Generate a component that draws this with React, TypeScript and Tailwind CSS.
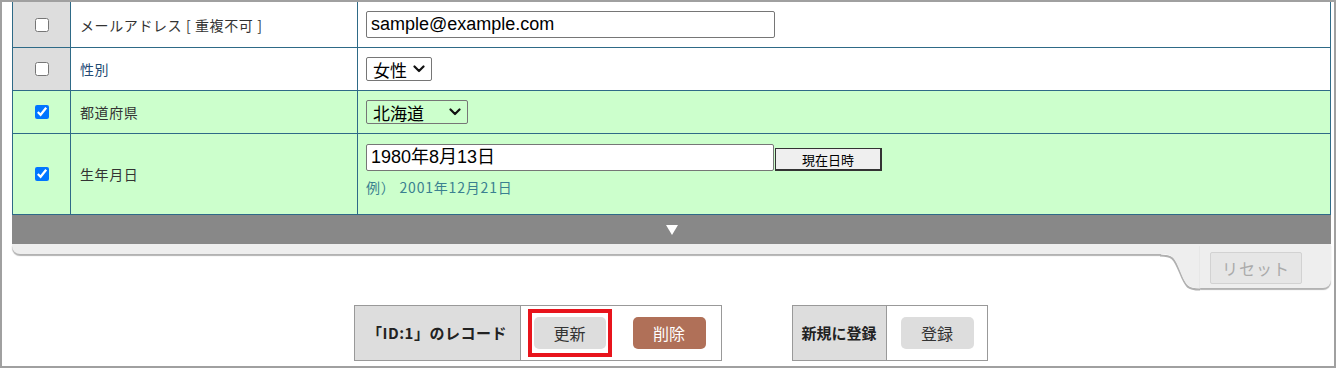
import React, { useState } from 'react';

const jp = "font-['Noto_Sans_CJK_JP',sans-serif]";
const arial = "font-['Liberation_Sans','Noto_Sans_CJK_JP',sans-serif]";

const Chevron: React.FC = () => (
  <svg width="12" height="8" viewBox="0 0 12 8" className="shrink-0">
    <path d="M1.5 1.5 L6 6 L10.5 1.5" fill="none" stroke="#111" strokeWidth="2.2" strokeLinecap="round" strokeLinejoin="round" />
  </svg>
);

interface RowProps {
  checked: boolean;
  label: React.ReactNode;
  height: string;
  align?: string;
  children: React.ReactNode;
}

const Row: React.FC<RowProps> = ({ checked, label, height, align = 'items-center', children }) => {
  const [on, setOn] = useState(checked);
  const bg = on ? 'bg-[#ccffcc]' : 'bg-white';
  const head = on ? 'bg-[#ccffcc]' : 'bg-[#dddddd]';
  return (
    <div className={`flex border-b border-[#2e6a87] ${height}`}>
      <div className={`w-[58px] shrink-0 flex items-center justify-center border-r border-[#2e6a87] ${head}`}>
        <input
          type="checkbox"
          checked={on}
          onChange={(e) => setOn(e.target.checked)}
          className="w-[14px] h-[14px] accent-[#0075ff]"
        />
      </div>
      <div className={`w-[287px] shrink-0 flex items-center pl-[9px] border-r border-[#2e6a87] text-[14px] tracking-[0.6px] leading-[18px] text-[#333] ${bg}`}>
        {label}
      </div>
      <div className={`flex-1 flex ${align} pl-[8px] ${bg}`}>{children}</div>
    </div>
  );
};

const App: React.FC = () => {
  const [email, setEmail] = useState('sample@example.com');
  const [birth, setBirth] = useState('1980年8月13日');

  return (
    <div className={`w-[1336px] h-[368px] border-2 border-[#a0a0a0] bg-white pl-[10px] pr-[3px] ${jp}`}>
      <div className="border-l border-r border-[#2e6a87]">
        <Row checked={false} height="h-[46px]" label={<span>メールアドレス [ 重複不可 ]</span>}>
          <input
            type="text"
            value={email}
            onChange={(e) => setEmail(e.target.value)}
            className={`w-[409px] h-[27px] border border-[#767676] rounded-[2px] px-[4px] text-[18px] text-black outline-none ${arial}`}
          />
        </Row>
        <Row checked={false} height="h-[43px]" label={<span className="text-[#234a74]">性別</span>}>
          <div className="h-[24px] w-[66px] border border-[#767676] rounded-[2px] flex items-center gap-[6px] pl-[6px] text-[17px] leading-none text-black">
            女性
            <Chevron />
          </div>
        </Row>
        <Row checked={true} height="h-[43px]" label={<span>都道府県</span>}>
          <div className="h-[24px] w-[102px] border border-[#767676] rounded-[2px] flex items-center justify-between pl-[6px] pr-[6px] text-[17px] leading-none text-black">
            北海道
            <Chevron />
          </div>
        </Row>
        <Row checked={true} height="h-[81px]" align="items-start" label={<span>生年月日</span>}>
          <div className="flex flex-col pt-[10px]">
            <div className="flex items-center">
              <input
                type="text"
                value={birth}
                onChange={(e) => setBirth(e.target.value)}
                className={`w-[408px] h-[27px] bg-white border border-[#767676] rounded-[2px] px-[4px] text-[18px] text-black outline-none ${arial}`}
              />
              <button className="ml-[1px] mt-[4px] w-[107px] h-[23px] bg-[#efefef] border border-[#333] border-r-2 border-b-2 text-[13px] leading-none text-black">
                現在日時
              </button>
            </div>
            <div className="mt-[7px] text-[14px] tracking-[0.8px] leading-[18px] text-[#3a8090]">例）&nbsp;2001年12月21日</div>
          </div>
        </Row>
      </div>

      <div className="h-[29px] bg-[#888888] flex items-center justify-center">
        <svg width="12" height="10" viewBox="0 0 12 10">
          <polygon points="0,0 12,0 6,10" fill="#fff" />
        </svg>
      </div>

      <div className="flex items-start">
        <div className="flex-1 h-[10px] bg-[#eeeeee] rounded-bl-[8px] shadow-[0_2px_1px_rgba(0,0,0,0.3)]" />
        <svg width="40" height="47" viewBox="0 0 40 47" className="shrink-0 -ml-[1px]">
          <path d="M0 11.5 C12 11.5 14 13.5 20 28.5 C26 43.5 28 45.5 40 45.5" fill="none" stroke="#b0b0b0" strokeWidth="2" />
          <path d="M0 0 H40 V44 C28 44 26 42 20 27 C14 12 12 10 0 10 Z" fill="#eeeeee" />
        </svg>
        <div className="w-[131px] shrink-0 h-[44px] bg-[#eeeeee] rounded-br-[8px] shadow-[0_2px_1px_rgba(0,0,0,0.3)] pl-[10px] pt-[8px]">
          <button className="w-[92px] h-[32px] bg-[#e6e6e6] border border-[#d2d2d2] rounded-[2px] text-[16px] tracking-[1px] text-[#aaaaaa]">
            リセット
          </button>
        </div>
      </div>

      <div className="mt-[14px] flex justify-center pr-[2px] gap-[70px]">
        <div className="flex h-[56px] border border-[#999999]">
          <div className="w-[166px] bg-[#dddddd] border-r border-[#999999] flex items-center justify-center text-[15px] tracking-[0.5px] font-bold text-[#222]">
            「ID:1」のレコード
          </div>
          <div className="w-[200px] flex items-center pl-[7px]">
            <div className="border-4 border-[#e8141c] px-[2px] py-[4px]">
              <button className="w-[72px] h-[32px] bg-[#dddddd] rounded-[5px] text-[16px] text-[#333]">更新</button>
            </div>
            <button className="ml-[21px] w-[73px] h-[32px] bg-[#b07058] rounded-[5px] text-[16px] text-white">削除</button>
          </div>
        </div>
        <div className="flex h-[56px] border border-[#999999]">
          <div className="w-[94px] bg-[#dddddd] border-r border-[#999999] flex items-center justify-center text-[15px] font-bold text-[#222]">
            新規に登録
          </div>
          <div className="w-[100px] flex items-center pl-[14px]">
            <button className="w-[73px] h-[32px] bg-[#dddddd] rounded-[5px] text-[16px] text-[#333]">登録</button>
          </div>
        </div>
      </div>
    </div>
  );
};

export default App;
